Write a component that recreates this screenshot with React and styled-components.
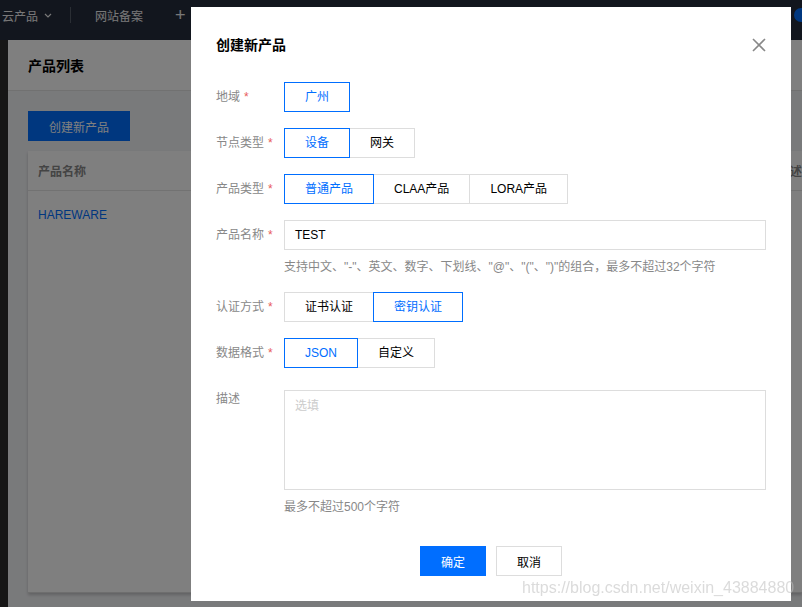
import React from 'react'
import styled, { createGlobalStyle, css } from 'styled-components'

const GlobalStyle = createGlobalStyle`
html, body {
    margin: 0;
    padding: 0;
    width: 100%;
    height: 100%;
    overflow: hidden;
    font-family: "Liberation Sans", "Noto Sans CJK SC", sans-serif;
    font-size: 12px;
    color: #000;
}
* {
    box-sizing: border-box;
}
`

const Page = styled.div`
display: flex;
flex-direction: column;
width: 802px;
height: 607px;
background: #f3f4f7;
`

const NavBar = styled.div`
display: flex;
align-items: center;
height: 40px;
flex-shrink: 0;
background: #242c3d;
color: #f0f0f0;
font-size: 12px;
padding-bottom: 10px;
`

const NavItem = styled.div`
display: flex;
align-items: center;
gap: 6px;
padding: 0 ${({ pad }) => pad || 24}px;
`

const NavDivider = styled.div`
width: 1px;
height: 16px;
background: #555c68;
`

const NavPlus = styled.div`
font-size: 18px;
line-height: 1;
padding-left: 24px;
`

const NavRight = styled.div`
margin-left: auto;
display: flex;
align-items: center;
gap: 6px;
`

const NavBox = styled.div`
width: 10px;
height: 12px;
border: 1px solid #ccc;
`

const NavAvatar = styled.div`
width: 14px;
height: 14px;
border-radius: 50%;
background: #006eff;
margin-right: -6px;
`

const Body = styled.div`
display: flex;
flex: 1;
`

const SideBar = styled.div`
width: 8px;
background: #2c2c2c;
`

const Content = styled.div`
flex: 1;
display: flex;
flex-direction: column;
`

const PageHeader = styled.div`
height: 51px;
background: #fff;
border-bottom: 1px solid #e2e2e2;
display: flex;
align-items: center;
padding: 0 20px;
font-size: 14px;
font-weight: bold;
`

const PageMain = styled.div`
flex: 1;
padding: 20px 0 14px 20px;
display: flex;
flex-direction: column;
gap: 10px;
`

const PrimaryButton = styled.button`
height: 30px;
padding: 0 20px;
border: none;
background: #006eff;
color: #fff;
font-family: inherit;
font-size: 12px;
cursor: pointer;
${({ wide }) => wide && css`
    width: 102px;
    padding: 0;
`}
`

const Card = styled.div`
flex: 1;
background: #fff;
box-shadow: 0 2px 3px rgba(0, 0, 0, 0.2);
display: flex;
flex-direction: column;
border-bottom: 1px solid #ddd;
`

const TableRow = styled.div`
display: flex;
align-items: center;
height: ${({ head }) => (head ? 40 : 48)}px;
padding: 0 10px;
border-bottom: ${({ head }) => (head ? '1px solid #e5e5e5' : 'none')};
color: ${({ head }) => (head ? '#888' : '#006eff')};
font-weight: ${({ head }) => (head ? 'bold' : 'normal')};
`

const Cell = styled.div`
flex: ${({ grow }) => (grow === undefined ? 1 : grow)};
width: ${({ w }) => (w ? `${w}px` : 'auto')};
white-space: nowrap;
`

const Mask = styled.div`
position: fixed;
inset: 0;
background: rgba(0, 0, 0, 0.5);
`

const Dialog = styled.div`
position: fixed;
left: 191px;
top: 7px;
width: 600px;
height: 594px;
background: #fff;
padding: 28px 25px 24px;
display: flex;
flex-direction: column;
`

const DialogHead = styled.div`
display: flex;
align-items: center;
justify-content: space-between;
height: 20px;
margin-bottom: 27px;
`

const DialogTitle = styled.div`
font-size: 14px;
font-weight: bold;
line-height: 20px;
`

const CloseButton = styled.div`
display: flex;
width: 14px;
height: 14px;
cursor: pointer;
`

const Form = styled.div`
display: flex;
flex-direction: column;
`

const FormRow = styled.div`
display: flex;
margin-top: ${({ top }) => (top === undefined ? 16 : top)}px;
`

const Label = styled.div`
width: 68px;
flex-shrink: 0;
color: #888;
line-height: ${({ tall }) => (tall ? 18 : 30)}px;
`

const Required = styled.span`
color: #e85b5b;
margin-left: 4px;
`

const Control = styled.div`
flex: 1;
display: flex;
flex-direction: column;
`

const Segment = styled.div`
display: flex;
`

const SegButton = styled.div`
height: 30px;
line-height: 28px;
padding: 0 20px;
border: 1px solid ${({ active }) => (active ? '#006eff' : '#ddd')};
color: ${({ active }) => (active ? '#006eff' : '#000')};
margin-left: -1px;
position: relative;
z-index: ${({ active }) => (active ? 1 : 0)};
background: #fff;
cursor: pointer;
white-space: nowrap;
&:first-child {
    margin-left: 0;
}
`

const TextInput = styled.div`
height: 30px;
line-height: 28px;
border: 1px solid #ddd;
padding: 0 10px;
`

const TextArea = styled.div`
height: 100px;
border: 1px solid #ddd;
padding: 6px 10px;
color: #ccc;
line-height: 18px;
`

const Help = styled.div`
margin-top: 8px;
line-height: 18px;
color: #888;
`

const Footer = styled.div`
display: flex;
justify-content: center;
gap: 10px;
margin-top: 30px;
`

const GhostButton = styled.button`
width: 66px;
height: 30px;
border: 1px solid #ddd;
background: #fff;
color: #000;
font-family: inherit;
font-size: 12px;
cursor: pointer;
`

const OkButton = styled(PrimaryButton)`
width: 66px;
padding: 0;
`

const Watermark = styled.div`
position: fixed;
left: 522px;
top: 578px;
font-family: "Liberation Sans", sans-serif;
font-size: 16px;
line-height: 20px;
color: rgba(190, 190, 190, 0.55);
pointer-events: none;
white-space: nowrap;
`

const Chevron = () => (
    <svg width="8" height="5" viewBox="0 0 8 5">
        <path d="M1 1l3 3 3-3" fill="none" stroke="#f0f0f0" strokeWidth="1.2" />
    </svg>
)

const CloseIcon = () => (
    <svg width="14" height="14" viewBox="0 0 14 14">
        <path d="M1 1l12 12M13 1L1 13" stroke="#888" strokeWidth="1.6" fill="none" />
    </svg>
)

const FieldGroup = ({ options, active }) => (
    <Segment>
        {options.map((item, i) => (
            <SegButton key={item} active={i === active}>{item}</SegButton>
        ))}
    </Segment>
)

export default function App() {
    return (
        <>
            <GlobalStyle />
            <Page>
                <NavBar>
                    <NavItem pad={2}>云产品 <Chevron /></NavItem>
                    <NavItem pad={16}><NavDivider /></NavItem>
                    <NavItem pad={8}>网站备案</NavItem>
                    <NavPlus>+</NavPlus>
                    <NavRight>
                        <NavBox />
                        <NavAvatar />
                    </NavRight>
                </NavBar>
                <Body>
                    <SideBar />
                    <Content>
                        <PageHeader>产品列表</PageHeader>
                        <PageMain>
                            <div>
                                <PrimaryButton wide>创建新产品</PrimaryButton>
                            </div>
                            <Card>
                                <TableRow head>
                                    <Cell>产品名称</Cell>
                                    <Cell grow={0} w={14}>描述</Cell>
                                </TableRow>
                                <TableRow>
                                    <Cell>HAREWARE</Cell>
                                </TableRow>
                            </Card>
                        </PageMain>
                    </Content>
                </Body>
            </Page>
            <Mask />
            <Dialog>
                <DialogHead>
                    <DialogTitle>创建新产品</DialogTitle>
                    <CloseButton><CloseIcon /></CloseButton>
                </DialogHead>
                <Form>
                    <FormRow top={0}>
                        <Label>地域<Required>*</Required></Label>
                        <Control><FieldGroup options={['广州']} active={0} /></Control>
                    </FormRow>
                    <FormRow>
                        <Label>节点类型<Required>*</Required></Label>
                        <Control><FieldGroup options={['设备', '网关']} active={0} /></Control>
                    </FormRow>
                    <FormRow>
                        <Label>产品类型<Required>*</Required></Label>
                        <Control><FieldGroup options={['普通产品', 'CLAA产品', 'LORA产品']} active={0} /></Control>
                    </FormRow>
                    <FormRow>
                        <Label>产品名称<Required>*</Required></Label>
                        <Control>
                            <TextInput>TEST</TextInput>
                            <Help>支持中文、"-"、英文、数字、下划线、"@"、"("、")"的组合，最多不超过32个字符</Help>
                        </Control>
                    </FormRow>
                    <FormRow>
                        <Label>认证方式<Required>*</Required></Label>
                        <Control><FieldGroup options={['证书认证', '密钥认证']} active={1} /></Control>
                    </FormRow>
                    <FormRow>
                        <Label>数据格式<Required>*</Required></Label>
                        <Control><FieldGroup options={['JSON', '自定义']} active={0} /></Control>
                    </FormRow>
                    <FormRow top={22}>
                        <Label tall>描述</Label>
                        <Control>
                            <TextArea>选填</TextArea>
                            <Help>最多不超过500个字符</Help>
                        </Control>
                    </FormRow>
                </Form>
                <Footer>
                    <OkButton>确定</OkButton>
                    <GhostButton>取消</GhostButton>
                </Footer>
            </Dialog>
            <Watermark>https://blog.csdn.net/weixin_43884880</Watermark>
        </>
    )
}
